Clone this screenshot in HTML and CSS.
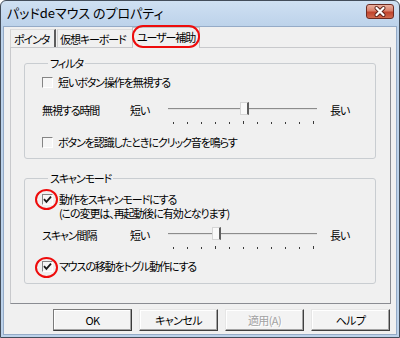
FILE: index.html
```html
<!DOCTYPE html>
<html lang="ja">
<head>
<meta charset="utf-8">
<title>パッドdeマウス のプロパティ</title>
<link rel="stylesheet" href="styles.css">
</head>
<body>
<div class="window">
  <div class="titlebar">
    <span class="title">パッドdeマウス のプロパティ</span>
    <span class="close">
      <svg width="26" height="13" viewBox="0 0 26 13">
        <path d="M9.5 3 L16.5 10 M16.5 3 L9.5 10" stroke="#5b2119" stroke-width="4" stroke-linecap="round"/>
        <path d="M9.5 3 L16.5 10 M16.5 3 L9.5 10" stroke="#ffffff" stroke-width="2.2" stroke-linecap="round"/>
      </svg>
    </span>
  </div>
  <div class="client">
    <div class="tabs">
      <div class="tab tab-first">ポインタ</div>
      <div class="tab tab-second">仮想キーボード</div>
      <div class="tab tab-active">ユーザー補助<span class="ring ring-tab"></span></div>
    </div>
    <div class="page">
      <fieldset class="group group-filter">
        <legend>フィルタ</legend>
        <div class="check row-a">
          <span class="box"></span>
          <span class="check-text">短いボタン操作を無視する</span>
        </div>
        <div class="slider slider-a">
          <span class="slabel">無視する時間</span>
          <span class="short">短い</span>
          <div class="track-area">
            <div class="track"></div>
            <div class="ticks">
              <i></i><i></i><i></i><i></i><i></i><i class="major"></i><i></i><i></i><i></i><i></i><i class="major"></i>
            </div>
            <div class="thumb thumb-a"></div>
          </div>
          <span class="long">長い</span>
        </div>
        <div class="check row-b">
          <span class="box"></span>
          <span class="check-text">ボタンを認識したときにクリック音を鳴らす</span>
        </div>
      </fieldset>

      <fieldset class="group group-scan">
        <legend>スキャンモード</legend>
        <div class="check row-c">
          <span class="box checked">
            <svg width="9" height="9" viewBox="0 0 9 9"><path d="M1 4.2 L3.4 6.8 L8 1.6" fill="none" stroke="#1a1a1a" stroke-width="1.8"/></svg>
            <span class="ring ring-box"></span>
          </span>
          <span class="check-text">動作をスキャンモードにする<br>(この変更は、再起動後に有効となります)</span>
        </div>
        <div class="slider slider-b">
          <span class="slabel">スキャン間隔</span>
          <span class="short">短い</span>
          <div class="track-area">
            <div class="track"></div>
            <div class="ticks">
              <i></i><i></i><i></i><i class="major"></i><i></i><i></i><i></i><i></i><i></i><i></i><i class="major"></i>
            </div>
            <div class="thumb thumb-b"></div>
          </div>
          <span class="long">長い</span>
        </div>
        <div class="check row-d">
          <span class="box checked">
            <svg width="9" height="9" viewBox="0 0 9 9"><path d="M1 4.2 L3.4 6.8 L8 1.6" fill="none" stroke="#1a1a1a" stroke-width="1.8"/></svg>
            <span class="ring ring-box ring-box2"></span>
          </span>
          <span class="check-text">マウスの移動をトグル動作にする</span>
        </div>
      </fieldset>
    </div>
    <div class="buttons">
      <button class="btn btn-default">OK</button>
      <button class="btn">キャンセル</button>
      <button class="btn btn-disabled">適用(A)</button>
      <button class="btn">ヘルプ</button>
    </div>
  </div>
</div>
</body>
</html>
```

FILE: styles.css
```css
html, body {
  margin: 0;
  padding: 0;
  background: #ffffff;
}

.window {
  width: 400px;
  height: 338px;
  box-sizing: border-box;
  border: 1px solid #434d5a;
  border-radius: 6px 6px 0 0;
  background: linear-gradient(#cfe0f2, #bcd2ea 26px, #bcd2ea);
  padding: 0 2px 2px 2px;
  display: flex;
  flex-direction: column;
  font-family: "Noto Sans CJK JP", "Noto Sans", sans-serif;
  font-feature-settings: "palt" 1;
  font-size: 11px;
  letter-spacing: -1.1px;
  color: #000;
}

.titlebar {
  height: 25px;
  display: flex;
  justify-content: space-between;
  align-items: flex-start;
  padding: 0 3px 0 4px;
}

.title {
  font-size: 13px;
  letter-spacing: 0;
  line-height: 25px;
  height: 25px;
  color: #000;
  margin-top: -1px;
}

.close {
  margin-top: 3px;
  width: 28px;
  height: 15px;
  box-sizing: border-box;
  border: 1px solid #6e2b22;
  border-radius: 3px;
  background: linear-gradient(#eab0a0 0%, #d9806b 45%, #c0432c 55%, #cf6a4f 100%);
  display: flex;
  align-items: center;
  justify-content: center;
}

.close svg {
  display: block;
}

.client {
  flex: 1;
  background: #f0f0f0;
  border: 1px solid #95abc7;
  padding: 0 5px 0 6px;
  display: flex;
  flex-direction: column;
}

/* Tabs */
.tabs {
  height: 20px;
  display: flex;
  align-items: flex-end;
  position: relative;
  z-index: 2;
}

.tab {
  height: 18px;
  line-height: 18px;
  box-sizing: border-box;
  white-space: nowrap;
  border-top: 1px solid #dcdcdc;
}

.tab-first {
  width: 46px;
  border-left: 1px solid #d4d4d4;
  border-right: 2px solid #5c5c5c;
  padding-left: 3px;
}

.tab-second {
  width: 75px;
  border-left: 1px solid #cfcfcf;
  margin-left: 1px;
  padding-left: 2px;
}

.tab-active {
  position: relative;
  width: 68px;
  height: 21px;
  line-height: 19px;
  padding-left: 4px;
  margin-bottom: -1px;
  background: #f0f0f0;
  border: 1px solid #c4c4c4;
  border-bottom: none;
}

.ring {
  position: absolute;
  box-sizing: border-box;
  border: 2.5px solid #ee0c0c;
  pointer-events: none;
}

.ring-tab {
  left: -1px;
  right: -1px;
  top: -3px;
  height: 23px;
  border-radius: 11px;
}

/* Tab page */
.page {
  height: 257px;
  box-sizing: border-box;
  border: 1px solid #8a8c92;
  border-top-color: #c8c9cc;
  border-left-color: #c8c9cc;
  padding: 8px 14px 0 13px;
}

.group {
  margin: 0;
  padding: 0 0 8px 17px;
  border: 1px solid #c9cdd1;
  border-radius: 3px;
  min-width: 0;
}

.group legend {
  margin-left: 6px;
  padding: 0 2px;
  line-height: 14px;
}

.group-scan {
  margin-top: 12px;
  padding-bottom: 9px;
}

.check {
  display: flex;
  align-items: center;
  height: 16px;
  line-height: 16px;
}

.box {
  position: relative;
  width: 11px;
  height: 11px;
  box-sizing: border-box;
  flex: none;
  border-top: 1px solid #858585;
  border-left: 1px solid #858585;
  border-right: 1px solid #ffffff;
  border-bottom: 1px solid #ffffff;
  background: #f6f6f6;
  margin-right: 5px;
  display: flex;
  align-items: center;
  justify-content: center;
}

.box.checked {
  margin-right: 6px;
}

.box svg {
  display: block;
}

.ring-box {
  left: -8px;
  top: -6px;
  width: 23px;
  height: 21px;
  border-radius: 50%;
}

.ring-box2 {
  top: -5px;
}

.row-a {
  margin-top: 4px;
}

.row-b {
  margin-top: 8px;
}

.row-c {
  margin-top: 7px;
  height: 28px;
  align-items: flex-start;
  line-height: 14px;
}

.row-c .box {
  margin-top: 2px;
}

.row-d {
  margin-top: 7px;
}

/* Sliders */
.slider {
  display: grid;
  grid-template-columns: 88px 38px 149px auto;
  height: 26px;
  align-items: start;
}

.slider-a {
  margin-top: 10px;
}

.slider-b {
  margin-top: 5px;
}

.slabel, .short, .long {
  line-height: 20px;
}

.long {
  margin-left: 13px;
}

.track-area {
  position: relative;
  height: 26px;
}

.track {
  margin-top: 8px;
  height: 1px;
  background: #8c8c8c;
  border-bottom: 1px solid #e2e2e2;
}

.ticks {
  margin-top: 12px;
  margin-left: 5px;
  width: 141px;
  display: flex;
  justify-content: space-between;
  align-items: flex-start;
}

.ticks i {
  display: block;
  width: 1px;
  height: 2px;
  background: #3a3a3a;
}

.ticks i.major {
  height: 3px;
  margin-top: -1px;
}

.thumb {
  position: absolute;
  top: 2px;
  width: 9px;
  height: 13px;
  box-sizing: border-box;
  border: 1px solid #d6d6d6;
  border-right: 2px solid #5e5e5e;
  background: #f9f9f9;
}

.thumb-a {
  left: 72px;
}

.thumb-b {
  left: 44px;
}

/* Buttons */
.buttons {
  display: flex;
  gap: 7px;
  margin-top: 5px;
  padding-left: 43px;
}

.btn {
  width: 79px;
  height: 22px;
  box-sizing: border-box;
  margin: 0;
  padding: 0;
  font-family: inherit;
  font-feature-settings: "palt" 1;
  font-size: 11px;
  letter-spacing: -0.6px;
  color: #000;
  background: #f3f3f3;
  border: 1px solid;
  border-color: #e6e6e6 #404040 #404040 #e6e6e6;
  box-shadow: inset -1px -1px 0 #a3a3a3, inset 1px 1px 0 #ffffff;
  border-radius: 0;
  line-height: 18px;
}

.btn-default {
  border-color: #7a7a7a #3a3a3a #3a3a3a #7a7a7a;
}

.btn-disabled {
  color: #a2a2a2;
  text-shadow: 1px 1px 0 #ffffff;
}
```
